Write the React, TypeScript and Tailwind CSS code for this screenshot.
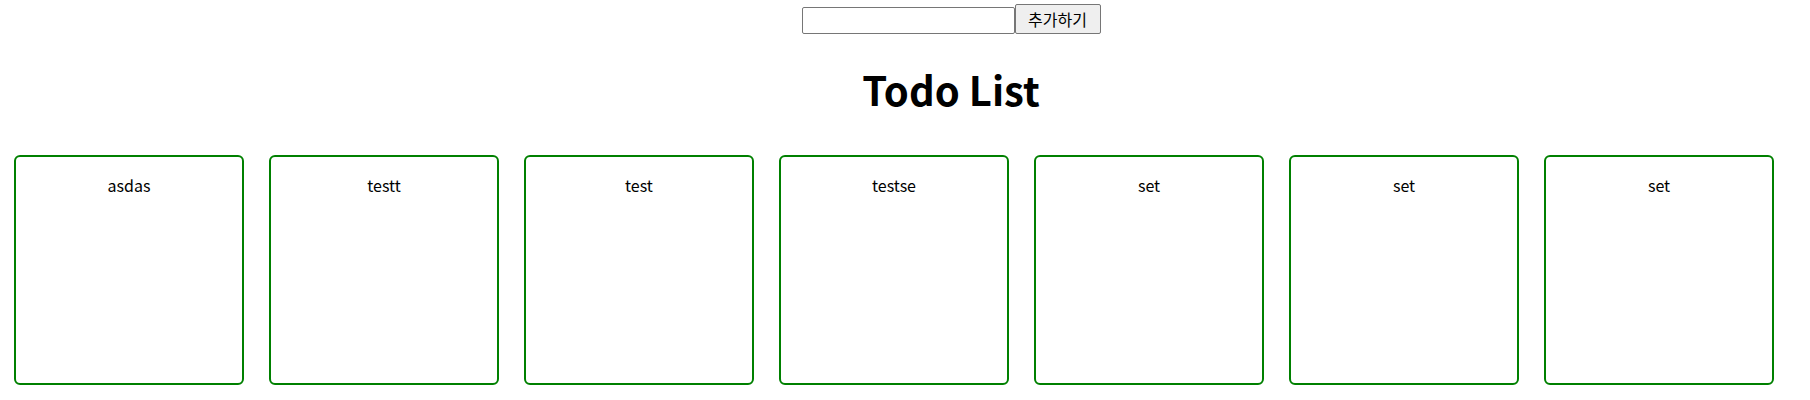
import { useState } from 'react';

const initialTodos = ['asdas', 'testt', 'test', 'testse', 'set', 'set', 'set'];

export default function App() {
  const [todos, setTodos] = useState<string[]>(initialTodos);
  const [text, setText] = useState('');

  const addTodo = () => {
    if (!text.trim()) return;
    setTodos([...todos, text]);
    setText('');
  };

  return (
    <div
      className="min-h-[400px] bg-white text-black"
      style={{ fontFamily: '"Noto Sans CJK KR", "Noto Sans", sans-serif' }}
    >
      {/* input row */}
      <div className="flex items-end justify-center pl-[92px] pt-[4px]">
        <input
          value={text}
          onChange={(e) => setText(e.target.value)}
          className="h-[27px] w-[213px] border border-[#767676] rounded-[2px] bg-white px-1 text-[14px] outline-none"
        />
        <button
          onClick={addTodo}
          className="h-[30px] w-[86px] border border-[#767676] rounded-[2px] bg-[#efefef] text-[16px] leading-none text-black"
        >
          추가하기
        </button>
      </div>

      {/* title */}
      <h1 className="mt-[25px] pl-[92px] text-center text-[40px] font-bold">Todo List</h1>

      {/* cards */}
      <div className="mt-[36px] flex gap-[25px] pl-[14px]">
        {todos.map((todo, i) => (
          <div
            key={i}
            className="h-[230px] w-[230px] shrink-0 rounded-[6px] border-2 border-[#008000] text-center"
          >
            <p className="mt-4 text-[16px]">{todo}</p>
          </div>
        ))}
      </div>
    </div>
  );
}
